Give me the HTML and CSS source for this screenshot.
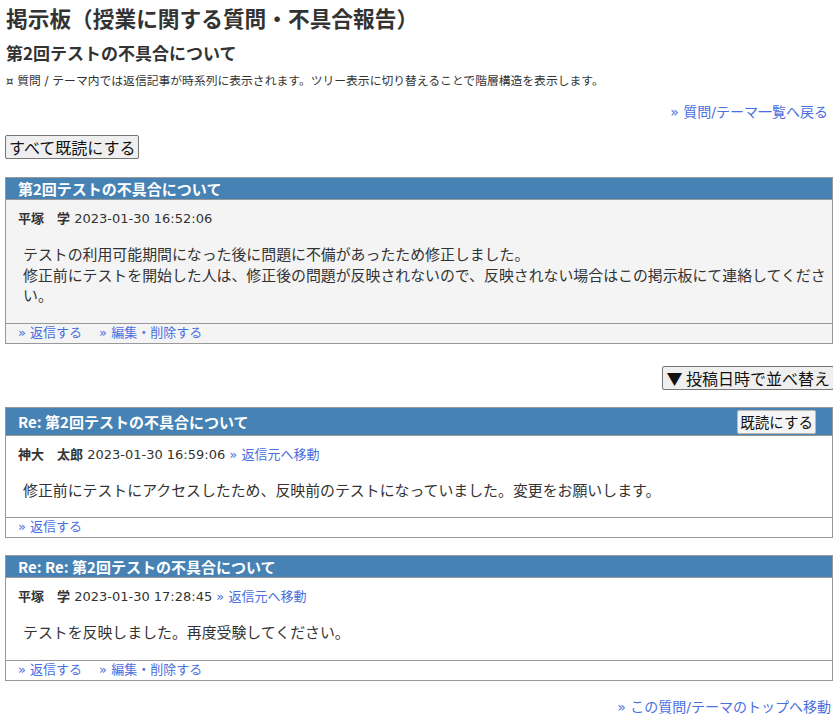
FILE: index.html
```html
<!DOCTYPE html>
<html lang="ja">
<head>
<meta charset="utf-8">
<title>掲示板</title>
<link rel="stylesheet" href="styles.css">
</head>
<body>
<h1 class="page-title">掲示板（授業に関する質問・不具合報告）</h1>
<h2 class="topic-title">第2回テストの不具合について</h2>
<p class="note">¤ 質問 / テーマ内では返信記事が時系列に表示されます。ツリー表示に切り替えることで階層構造を表示します。</p>
<div class="right-link"><a href="#">» 質問/テーマ一覧へ戻る</a></div>
<div class="actions"><button class="btn btn-big">すべて既読にする</button></div>

<div class="post post-first">
  <div class="post-head"><span class="post-title">第2回テストの不具合について</span></div>
  <div class="post-meta"><span class="author">平塚　学</span> 2023-01-30 16:52:06</div>
  <div class="post-body">テストの利用可能期間になった後に問題に不備があったため修正しました。<br>修正前にテストを開始した人は、修正後の問題が反映されないので、反映されない場合はこの掲示板にて連絡してください。</div>
  <div class="post-foot"><a href="#">» 返信する</a><a href="#">» 編集・削除する</a></div>
</div>

<div class="sort-row"><button class="btn btn-big">▼ 投稿日時で並べ替え</button></div>

<div class="post">
  <div class="post-head"><span class="post-title">Re: 第2回テストの不具合について</span><button class="btn btn-read">既読にする</button></div>
  <div class="post-meta"><span class="author">神大　太郎</span> 2023-01-30 16:59:06 <a href="#">» 返信元へ移動</a></div>
  <div class="post-body">修正前にテストにアクセスしたため、反映前のテストになっていました。変更をお願いします。</div>
  <div class="post-foot"><a href="#">» 返信する</a></div>
</div>

<div class="post">
  <div class="post-head"><span class="post-title">Re: Re: 第2回テストの不具合について</span></div>
  <div class="post-meta"><span class="author">平塚　学</span> 2023-01-30 17:28:45 <a href="#">» 返信元へ移動</a></div>
  <div class="post-body">テストを反映しました。再度受験してください。</div>
  <div class="post-foot"><a href="#">» 返信する</a><a href="#">» 編集・削除する</a></div>
</div>

<div class="right-link bottom-link"><a href="#">» この質問/テーマのトップへ移動</a></div>
</body>
</html>
```

FILE: styles.css
```css
html, body {
  background: #fff;
}
body {
  margin: 0 7px 0 5px;
  font-family: "DejaVu Sans", "Noto Sans CJK JP", sans-serif;
  font-size: 14px;
  color: #333;
}
a {
  color: #4a6fe0;
  text-decoration: none;
}
.page-title {
  font-family: "Noto Sans CJK JP", sans-serif;
  font-size: 21.7px;
  font-weight: bold;
  margin: 0;
  padding: 4px 0 0 1px;
  line-height: 28px;
  color: #333;
}
.topic-title {
  font-family: "Noto Sans CJK JP", sans-serif;
  font-size: 17px;
  font-weight: bold;
  margin: 0;
  padding: 9px 0 0 1px;
  line-height: 24px;
  color: #333;
}
.note {
  font-size: 11.8px;
  margin: 0;
  padding: 8px 0 0 1px;
  line-height: 16px;
  color: #333;
}
.right-link {
  text-align: right;
  font-size: 14px;
  line-height: 20px;
  padding: 13px 5px 0 0;
}
.actions {
  display: flex;
  padding-top: 13px;
}
.btn {
  font-family: "Noto Sans CJK JP", sans-serif;
  background: #efefef;
  color: #111;
  border: 1px solid #767676;
  border-radius: 2px;
  cursor: pointer;
}
.btn-big {
  font-size: 16px;
  line-height: 20px;
  padding: 1px 3px;
}
.btn-read {
  font-size: 14.5px;
  line-height: 20px;
  padding: 1px 2px;
  border-color: #bbb;
  background: #f4f4f4;
}
.post {
  border: 1px solid #999;
  background: #fff;
  margin-top: 17px;
}
.post-first {
  background: #f4f4f4;
  margin-top: 18px;
}
.post-head {
  background: #4682b4;
  color: #fff;
  display: flex;
  align-items: center;
  justify-content: space-between;
  padding: 0 16px 0 12px;
  min-height: 21px;
  border-bottom: 1px solid #999;
}
.post-title {
  font-family: "Noto Sans CJK JP", sans-serif;
  font-size: 15px;
  font-weight: bold;
  line-height: 21px;
}
.post-head .btn-read {
  margin: 2px 0 1px;
}
.post-meta {
  font-size: 13px;
  line-height: 18px;
  padding: 10px 12px 0;
}
.author {
  font-weight: bold;
}
.post-body {
  font-family: "Noto Sans CJK JP", sans-serif;
  font-size: 14.9px;
  line-height: 20.5px;
  padding: 16px 0 17px 17px;
}
.post-foot {
  border-top: 1px solid #999;
  font-size: 13px;
  line-height: 18px;
  padding: 0 12px 1px;
  display: flex;
  gap: 17px;
}
.sort-row {
  display: flex;
  justify-content: flex-end;
  padding-top: 22px;
}
.sort-row .btn {
  margin-right: -1px;
}
.bottom-link {
  padding: 16px 2px 0 0;
}
```
